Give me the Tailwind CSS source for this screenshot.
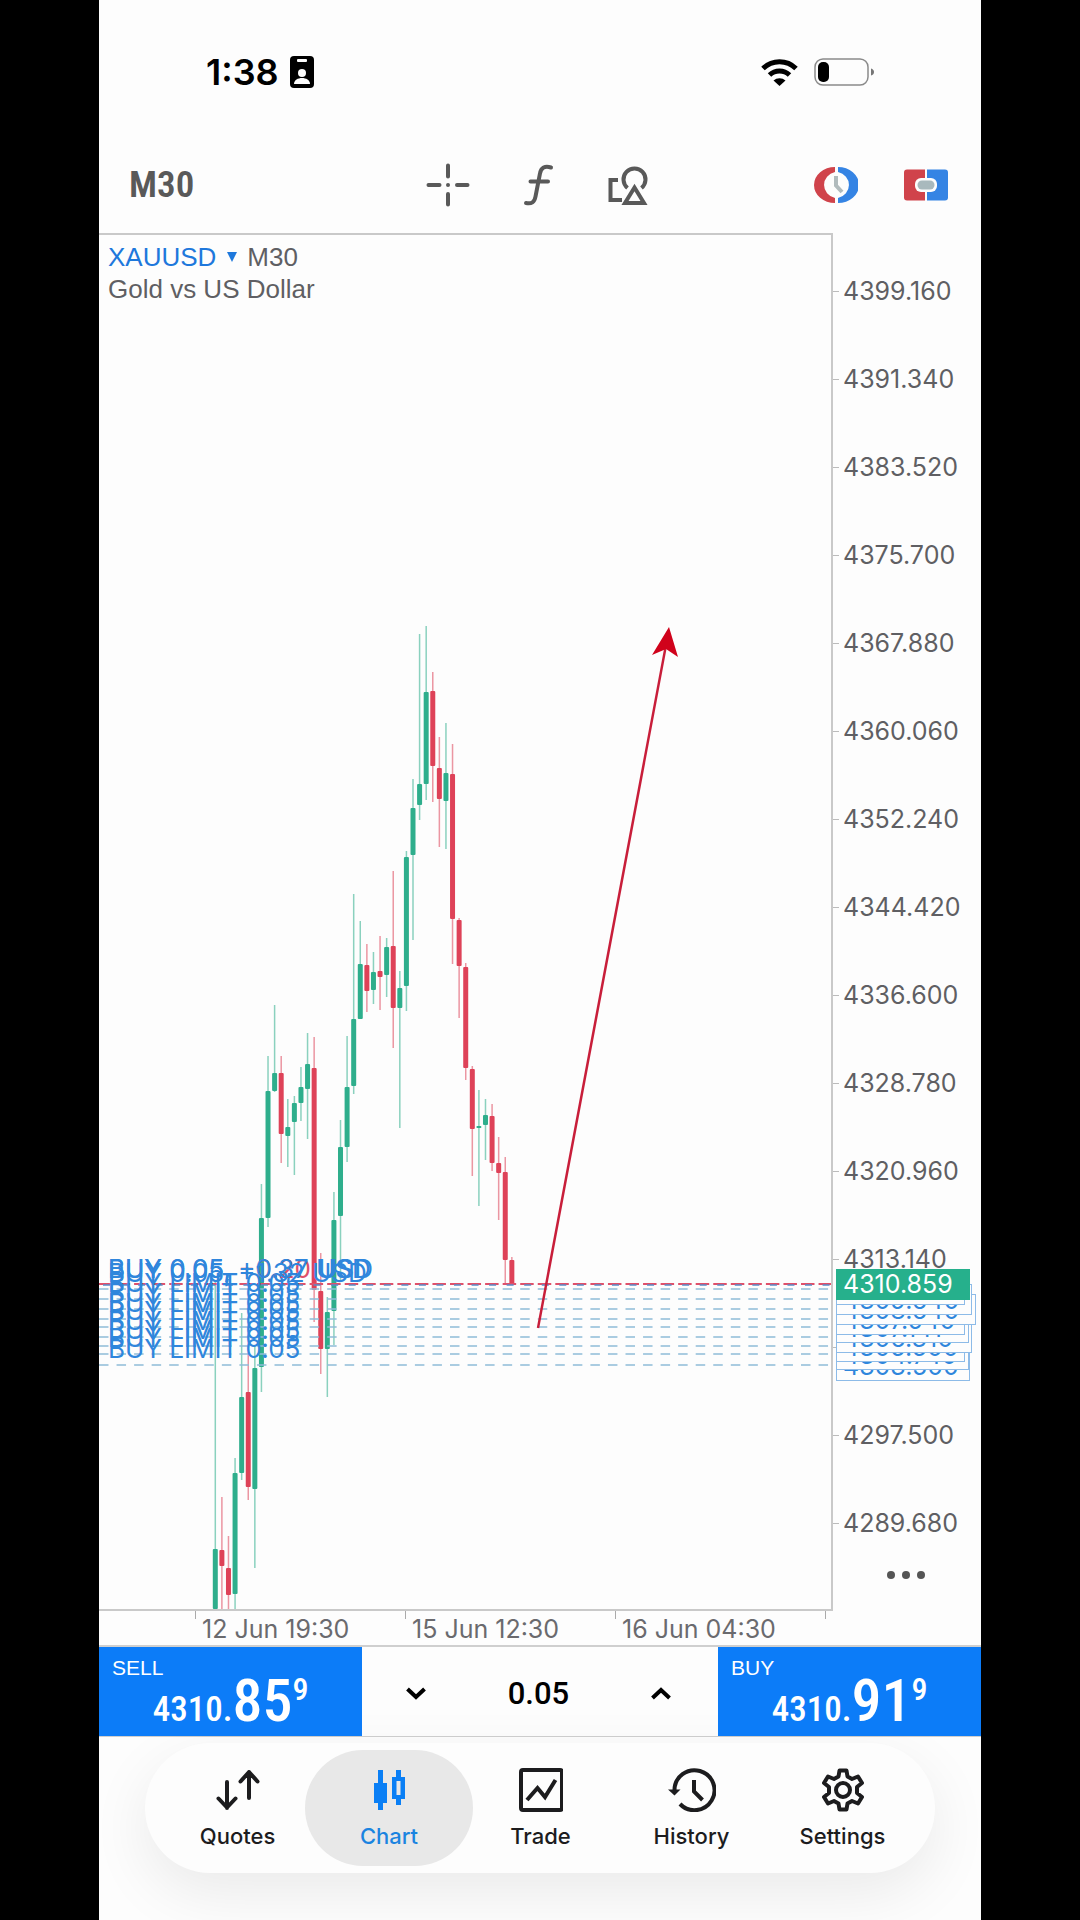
<!DOCTYPE html>
<html lang="en">
<head>
    <meta charset="UTF-8">
    <meta name="viewport" content="width=device-width, initial-scale=1.0">
    <title>XAUUSD M30</title>
    <script src="https://cdn.jsdelivr.net/npm/@tailwindcss/browser@4"></script>
</head>
<body class="bg-black font-['Inter',sans-serif]">
    <div class="mx-auto w-full max-w-[882px] min-h-screen bg-[#fdfdfd] flex flex-col overflow-hidden">

        <!-- Status bar -->
        <div class="h-36 flex items-center justify-between pl-[107px] pr-[106px] text-black">
            <div class="flex items-center gap-[11px]">
                <span class="text-[36px] leading-10 font-semibold">1:38</span>
                <svg class="w-6 h-8" viewBox="0 0 24 32">
                    <rect width="24" height="32" rx="4" />
                    <rect x="7" y="3" width="10" height="3" rx="1" fill="#fdfdfd" />
                    <circle cx="12" cy="17" r="4" fill="#fdfdfd" />
                    <path d="M4 28c0-4 4-6 8-6s8 2 8 6z" fill="#fdfdfd" />
                </svg>
            </div>
            <div class="flex items-center gap-4">
                <svg class="w-[37px] h-7" viewBox="0 0 37 28">
                    <g fill="none" stroke="#000" stroke-width="5">
                        <path d="M2 10.500a23.500 23.500 0 0 1 33 0" />
                        <path d="M8.500 17a14.500 14.500 0 0 1 20 0" />
                    </g>
                    <path d="M12.500 22.500a9 9 0 0 1 12 0L18.500 28z" />
                </svg>
                <svg class="w-[61px] h-7" viewBox="0 0 61 28">
                    <rect x="1" y="1" width="53" height="26" rx="8" fill="none" stroke="#8a8a8a" stroke-width="1.500" />
                    <rect x="4" y="4" width="11" height="20" rx="5" />
                    <path d="M57 10.500q3 1 3 3.500t-3 3.500z" fill="#777" />
                </svg>
            </div>
        </div>

        <!-- Toolbar -->
        <div class="h-[89px] pb-2 pl-[30px] pr-[33px] grid grid-cols-[297px_1fr_auto] items-center text-[#595959]">
            <button class="text-left text-[37px] leading-10 font-semibold font-['Roboto_Condensed','Liberation_Sans_Narrow',sans-serif]">M30</button>
            <div class="flex items-center gap-[52px]">
                <button aria-label="Crosshair">
                    <svg class="w-11 h-11" viewBox="0 0 44 44" stroke="currentColor" stroke-width="4" stroke-linecap="round">
                        <path d="M22 2.500v11M22 31v10.500M2.500 22h11M31 22h10.500M22 22h.01" />
                    </svg>
                </button>
                <button aria-label="Indicators">
                    <svg class="w-8 h-11" viewBox="0 0 32 44" fill="none" stroke="currentColor" stroke-width="4" stroke-linecap="round">
                        <path d="M29 4.500c-6-2-10 0-11 6l-4.500 23c-1 6-4 7.500-9.500 6.500M8.500 18.500H26" />
                    </svg>
                </button>
                <button aria-label="Objects">
                    <svg class="w-[42px] h-11" viewBox="0 0 42 44" fill="none" stroke="currentColor" stroke-width="4">
                        <path d="M12 17H4.500v20H16" />
                        <path d="M21.500 25a11 11 0 1 1 14 0" />
                        <path d="M28.500 24.500L38 40H19z" />
                    </svg>
                </button>
            </div>
            <div class="flex items-center gap-[46px]">
                <button aria-label="Trading session">
                    <svg class="w-11 h-11" viewBox="0 0 44 44">
                        <path d="M21 4v5a15 13.500 0 0 0 0 26v5A21 18 0 0 1 21 4z" fill="#d0434b" />
                        <path d="M24 4v5a15 13.500 0 0 1 0 26v5A21 18 0 0 0 24 4z" fill="#3584e4" />
                        <path d="M22 13v9.500l6 6.500" fill="none" stroke="#b1bbbd" stroke-width="4" />
                    </svg>
                </button>
                <button aria-label="One click trading">
                    <svg class="w-11 h-11" viewBox="0 0 44 44">
                        <path d="M3 6.500h18v31H3q-3 0-3-3v-25q0-3 3-3z" fill="#d0434b" />
                        <path d="M23 6.500h18q3 0 3 3v25q0 3-3 3H23z" fill="#3584e4" />
                        <rect x="11" y="15" width="22" height="14" rx="6" fill="#fdfdfd" />
                        <rect x="13.500" y="17.500" width="17" height="9" rx="4.500" fill="#a9b9bd" />
                    </svg>
                </button>
            </div>
        </div>

        <!-- Chart and price scale -->
        <div class="flex">
            <div class="relative flex-1 min-w-0 border-t-2 border-r-2 border-b-2 border-[#c9c9c9]">
                <svg class="block w-full" viewBox="99 235 732 1374" font-family="Inter, sans-serif" font-size="26">
                    <g id="candles"></g>
                    <g id="orders"></g>
                    <path d="M538 1328L666 645" stroke="#c81e3a" stroke-width="2.500" />
                    <path d="M669 627L678 657L666 649L652 655z" fill="#d0021b" />
                </svg>
                <div class="absolute top-[6px] left-[9px] text-[26px] leading-8 text-[#5f5f63] font-['Liberation_Sans',sans-serif]">
                    <div class="flex items-center gap-[10px]">
                        <button class="flex items-center gap-[11px] text-[#1e78dc]">
                            XAUUSD
                            <svg class="w-[10px] h-[10px]" viewBox="0 0 10 10" fill="currentColor"><path d="M0 0h10L5 10z" /></svg>
                        </button>
                        <span>M30</span>
                    </div>
                    <div>Gold vs US Dollar</div>
                </div>
            </div>

            <div class="relative w-[148px] shrink-0 pt-[14px] text-[25px] leading-[30px] text-[#5f5f63]">
                <div id="scale"></div>
                <div id="tags"></div>
                <button aria-label="More" class="absolute right-[56px] bottom-8 flex gap-[7px]">
                    <span class="size-2 rounded-full bg-[#555]"></span>
                    <span class="size-2 rounded-full bg-[#555]"></span>
                    <span class="size-2 rounded-full bg-[#555]"></span>
                </button>
            </div>
        </div>

        <!-- Time scale -->
        <div class="h-9 pl-24 flex text-[25px] leading-9 text-[#6a6a6e] border-b-2 border-[#cfcfcf] whitespace-nowrap">
            <div class="w-[210px] flex gap-[6px]"><i class="w-px h-2 bg-[#aaa]"></i>12 Jun 19:30</div>
            <div class="w-[210px] flex gap-[6px]"><i class="w-px h-2 bg-[#aaa]"></i>15 Jun 12:30</div>
            <div class="w-[210px] flex gap-[6px]"><i class="w-px h-2 bg-[#aaa]"></i>16 Jun 04:30</div>
            <i class="w-px h-2 bg-[#aaa]"></i>
        </div>

        <!-- One click trading -->
        <div class="h-[90px] flex border-b border-[#cfcfcf]">
            <button class="relative w-[263px] bg-[#0c7cf8] text-white font-['Roboto_Condensed','Liberation_Sans_Narrow',sans-serif] font-medium">
                <span class="absolute left-[13px] top-[9px] text-[21px] leading-6 font-normal font-['Liberation_Sans',sans-serif]">SELL</span>
                <span class="flex items-baseline justify-center pt-5 text-[35px] leading-[68px]">4310.<span class="text-[60px]">85</span><sup class="text-[32px] leading-none self-start top-[6px]">9</sup></span>
            </button>
            <div class="flex-1 flex items-center justify-between pl-[44px] pr-[47px] pt-1">
                <button aria-label="Decrease volume">
                    <svg class="w-5 h-5" viewBox="0 0 20 20" fill="none" stroke="#000" stroke-width="4"><path d="M1.500 5l8.500 8 8.500-8" /></svg>
                </button>
                <input type="text" value="0.05" aria-label="Volume" class="w-[120px] bg-transparent text-center text-[31px] leading-9 font-medium font-['Roboto',sans-serif]">
                <button aria-label="Increase volume">
                    <svg class="w-5 h-5" viewBox="0 0 20 20" fill="none" stroke="#000" stroke-width="4"><path d="M1.500 14l8.500-8 8.500 8" /></svg>
                </button>
            </div>
            <button class="relative w-[263px] bg-[#0c7cf8] text-white font-['Roboto_Condensed','Liberation_Sans_Narrow',sans-serif] font-medium">
                <span class="absolute left-[13px] top-[9px] text-[21px] leading-6 font-normal font-['Liberation_Sans',sans-serif]">BUY</span>
                <span class="flex items-baseline justify-center pt-5 text-[35px] leading-[68px]">4310.<span class="text-[60px]">91</span><sup class="text-[32px] leading-none self-start top-[6px]">9</sup></span>
            </button>
        </div>

        <!-- Tab bar -->
        <div class="px-[46px] pt-[6px] pb-[46px]">
            <nav class="h-[130px] rounded-full bg-[#fdfdfd] shadow-[0_20px_60px_rgba(0,0,0,0.08)] px-[17px] flex items-center text-[22px] leading-6 font-medium text-[#1c1c1e]">
                <a href="#" class="flex-1 flex flex-col items-center gap-3">
                    <svg class="w-11 h-11" viewBox="0 0 44 44" fill="none" stroke="currentColor" stroke-width="4" stroke-linecap="round" stroke-linejoin="round">
                        <path d="M11 14v26M2.500 30.500L11 39.500l8.500-9M33 30V4M24.500 13.500L33 4l8.500 9.500" />
                    </svg>
                    Quotes
                </a>
                <a href="#" class="w-[168px] h-[116px] -mx-2 shrink-0 rounded-full bg-[#e8e8e8] text-[#1b84e0] flex flex-col items-center justify-center gap-3">
                    <svg class="w-11 h-11" viewBox="0 0 44 44" fill="#0a7ff5">
                        <path d="M11 2h5v13h4v20h-4v7h-5v-7H7V15h4z" />
                        <path fill-rule="evenodd" d="M29 2h5v7h4v22h-4v6h-5v-6h-4V9h4zM29.500 13v14h4V13z" />
                    </svg>
                    Chart
                </a>
                <a href="#" class="flex-1 flex flex-col items-center gap-3">
                    <svg class="w-11 h-11" viewBox="0 0 44 44" fill="none" stroke="currentColor" stroke-width="4">
                        <rect x="2" y="2" width="41" height="40" rx="2" />
                        <path d="M8 32l10.500-12 7.500 9L36.500 12" />
                    </svg>
                    Trade
                </a>
                <a href="#" class="flex-1 flex flex-col items-center gap-3">
                    <svg class="w-12 h-11" viewBox="0 0 48 44" fill="none" stroke="currentColor" stroke-width="4">
                        <path d="M6.500 22A20 20 0 1 1 12 36" />
                        <path d="M26 12v11.500l8.500 8.500" />
                        <path d="M0 21.500h12.500L6.500 27.500z" fill="currentColor" stroke="none" />
                    </svg>
                    History
                </a>
                <a href="#" class="flex-1 flex flex-col items-center gap-3">
                    <svg class="w-11 h-11" viewBox="0 0 44 44" fill="none" stroke="currentColor" stroke-width="4" stroke-linejoin="round">
                        <path d="M18.500 2.500h7l1 6 4.500 2.500 6-2.500 4 6.500-5 4v6l5 4-4 6.500-6-2.500-4.500 2.500-1 6h-7l-1-6-4.500-2.500-6 2.500-4-6.500 5-4v-6l-5-4 4-6.500 6 2.500 4.500-2.500z" />
                        <circle cx="22" cy="22" r="7" />
                    </svg>
                    Settings
                </a>
            </nav>
        </div>
    </div>

    <script>
        // [high, body top, body bottom, low, rising]
        const candles = [
            [1280, 1549, 1609, 1609, 1], [1497, 1550, 1566, 1609, 0], [1536, 1568, 1595, 1609, 0],
            [1458, 1473, 1594, 1609, 1], [1313, 1397, 1473, 1480, 1], [1340, 1392, 1487, 1500, 0],
            [1345, 1368, 1489, 1568, 1], [1184, 1218, 1367, 1392, 1], [1056, 1091, 1218, 1227, 1],
            [1005, 1073, 1091, 1092, 1], [1056, 1073, 1134, 1163, 0], [1099, 1127, 1136, 1167, 1],
            [1096, 1103, 1122, 1175, 1], [1067, 1087, 1103, 1121, 1], [1033, 1064, 1089, 1139, 1],
            [1037, 1068, 1290, 1322, 0], [1253, 1291, 1349, 1374, 0], [1297, 1312, 1349, 1397, 1],
            [1192, 1220, 1311, 1345, 1], [1120, 1147, 1216, 1280, 1], [1036, 1087, 1147, 1162, 1],
            [894, 1019, 1086, 1094, 1], [921, 964, 1019, 1019, 1], [944, 965, 991, 1012, 0],
            [952, 972, 990, 1004, 1], [936, 971, 977, 1010, 0], [938, 947, 975, 997, 1],
            [871, 946, 1008, 1048, 0], [971, 988, 1008, 1128, 1], [851, 857, 986, 1011, 1],
            [779, 808, 855, 940, 1], [634, 784, 805, 820, 1], [626, 692, 784, 800, 1],
            [672, 691, 766, 802, 0], [737, 768, 799, 847, 0], [723, 773, 801, 849, 1],
            [744, 774, 919, 964, 0], [918, 920, 966, 1018, 0], [963, 967, 1068, 1080, 0],
            [1066, 1069, 1129, 1176, 0], [1090, 1126, 1128, 1206, 1], [1099, 1115, 1125, 1160, 1],
            [1104, 1116, 1163, 1171, 0], [1137, 1163, 1173, 1220, 0], [1157, 1172, 1260, 1283, 0],
            [1257, 1260, 1284, 1284, 0],
        ];

        document.getElementById('candles').innerHTML = candles.map(([high, top, bottom, low, up], i) => {
            const x = 215.3 + i * 6.59;
            const color = up ? '#2eae8c' : '#de4258';
            return `<path d="M${x} ${high}V${low}" stroke="${color}" stroke-width="1.5" opacity="0.55" />
                <rect x="${x - 2.5}" y="${top}" width="5" height="${bottom - top}" rx="1" fill="${color}" />`;
        }).join('');

        // Pending orders: [line position, price, tag width]
        const limits = [
            [1289, '4310.480', 129], [1299, '4309.640', 136], [1309, '4308.640', 140],
            [1319, '4307.940', 129], [1327, '4307.141', 133], [1337, '4306.310', 136],
            [1346, '4305.500', 129], [1354, '4304.740', 133], [1365, '4303.500', 134],
        ];

        let orders = '';
        limits.forEach(([y]) => {
            orders += `<path d="M99 ${y}H831" stroke="#8fbcd8" stroke-width="1.5" stroke-dasharray="9.5 8.05" />`;
        });
        orders += '<path d="M99 1284H831" stroke="#e0506a" stroke-width="2" stroke-dasharray="13.5 4.05" />';
        orders += '<path d="M103 1285H831" stroke="#5a8ac8" stroke-width="1.5" stroke-dasharray="7 10.55" />';
        limits.slice(1).forEach(([y]) => {
            orders += `<text x="108" y="${y - 7}" fill="#2f86dc">BUY LIMIT 0.05</text>`;
        });
        orders += '<text x="108" y="1278" fill="#2f86dc">BUY 0.05, <tspan fill="#e0506a">−0.20</tspan> USD</text>';
        orders += '<text x="108" y="1282" fill="#2f86dc">BUY 0.05, +1.32 USD</text>';
        orders += '<text x="108" y="1278" fill="#2f86dc">BUY 0.05, +0.37 USD</text>';
        document.getElementById('orders').innerHTML = orders;

        // Price scale, one row for each step
        let scale = '';
        for (let i = 0; i < 15; i++) {
            scale += `<div class="h-[88px] flex items-center gap-1">
                <i class="w-[6px] h-px bg-[#bbb]"></i>${(4399.16 - i * 7.82).toFixed(3)}</div>`;
        }
        document.getElementById('scale').innerHTML = scale;

        // Lower tags lie under the higher ones
        let tags = '';
        limits.slice().reverse().forEach(([y, price, width]) => {
            tags += `<div class="absolute left-[3px] h-[31px] pl-[6px] border border-[#8dbbe8] bg-[#fdfdfd] text-[#2f86dc]"
                style="top:${y - 248}px;width:${width}px">${price}</div>`;
        });
        tags += '<div class="absolute left-[3px] top-[1036px] h-[31px] w-[134px] pl-[7px] bg-[#26b08c] text-white">4310.859</div>';
        document.getElementById('tags').innerHTML = tags;
    </script>
</body>
</html>
